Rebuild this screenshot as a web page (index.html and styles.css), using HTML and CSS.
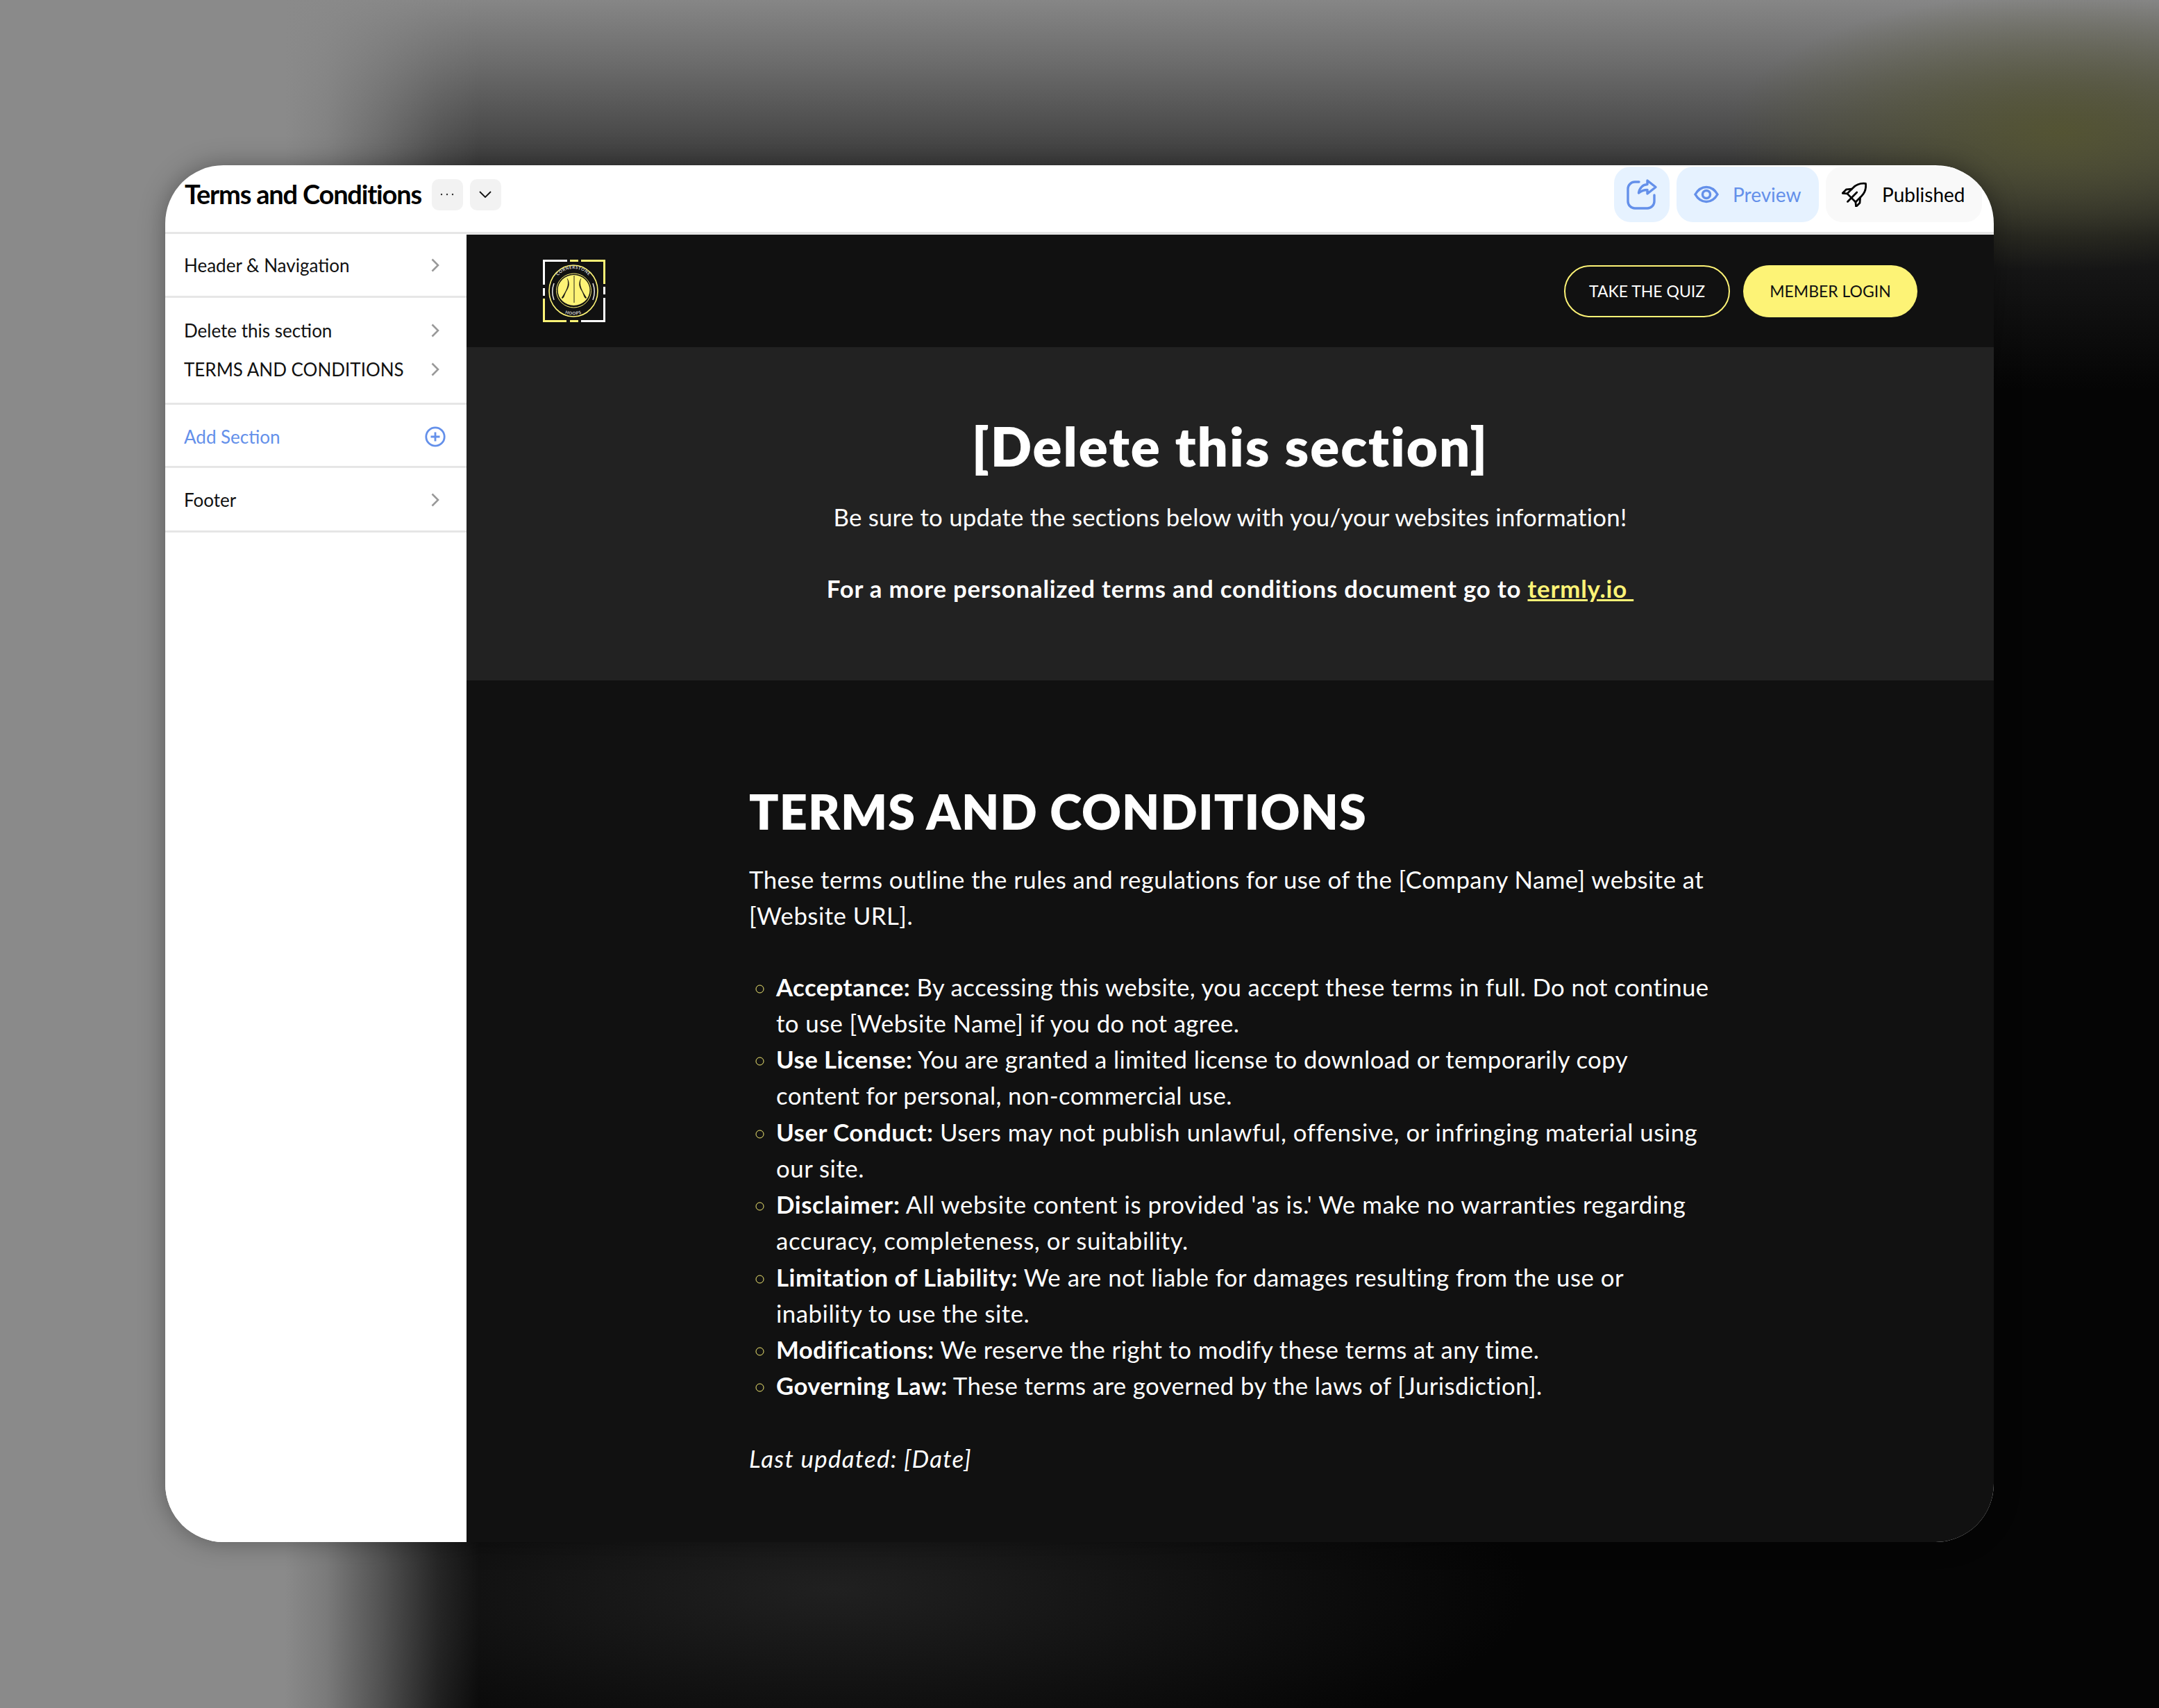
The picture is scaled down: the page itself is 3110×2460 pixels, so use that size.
FILE: index.html
```html
<!DOCTYPE html>
<html lang="en">
<head>
<meta charset="utf-8">
<title>Terms and Conditions</title>
<link rel="stylesheet" href="styles.css">
</head>
<body>
<div class="window">
  <header class="topbar">
    <div class="title-group">
      <h1 class="title">Terms and Conditions</h1>
      <button class="mini-btn" aria-label="More">
        <svg class="mini-dots" viewBox="0 0 20 4"><circle cx="2" cy="2" r="1.200"/><circle cx="10" cy="2" r="1.200"/><circle cx="18" cy="2" r="1.200"/></svg>
      </button>
      <button class="mini-btn" aria-label="Expand">
        <svg class="mini-chevron" viewBox="0 0 18 10"><path d="M1 1l8 8 8-8"/></svg>
      </button>
    </div>
    <div class="actions">
      <button class="action share" aria-label="Share">
        <svg class="share-icon" viewBox="0 0 48 48"><path d="M20 6H14A10 10 0 0 0 4 16V34A10 10 0 0 0 14 44H32A10 10 0 0 0 42 34V25"/><path d="M32 4L44 13.500 32 23V17.500C27 17.500 23 19 19.500 22 20.500 15 25 10 32 9.500Z"/></svg>
      </button>
      <button class="action preview">
        <svg class="eye-icon" viewBox="0 0 36 26"><path d="M2 13C6 6 11 2.500 18 2.500S30 6 34 13C30 20 25 23.500 18 23.500S6 20 2 13Z"/><circle cx="18" cy="13" r="5.500"/></svg>
        <span>Preview</span>
      </button>
      <button class="action published">
        <svg class="rocket-icon" viewBox="-24 -19 42 42"><g transform="rotate(45)"><path d="M0-23C9-16 10-9 10-3V11H-10V-3C-10-9-9-16 0-23Z"/><path d="M-10 0L-16 7V16L-10 11"/><path d="M10 0L16 7V16L10 11"/><path d="M0-2V9M0 11V20"/></g></svg>
        <span>Published</span>
      </button>
    </div>
  </header>
  <div class="body-row">
    <aside class="sidebar">
      <div class="group group-head">
        <a class="row">Header &amp; Navigation<svg class="chev" viewBox="0 0 12 20"><path d="M1.500 1.500l8.500 8.500-8.500 8.500"/></svg></a>
      </div>
      <div class="group group-sections">
        <a class="row">Delete this section<svg class="chev" viewBox="0 0 12 20"><path d="M1.500 1.500l8.500 8.500-8.500 8.500"/></svg></a>
        <a class="row">TERMS AND CONDITIONS<svg class="chev" viewBox="0 0 12 20"><path d="M1.500 1.500l8.500 8.500-8.500 8.500"/></svg></a>
      </div>
      <div class="group group-add">
        <a class="row add">Add Section<svg class="plus" viewBox="0 0 30 30"><circle cx="15" cy="15" r="13.200"/><path d="M15 8.500v13M8.500 15h13"/></svg></a>
      </div>
      <div class="group group-foot">
        <a class="row">Footer<svg class="chev" viewBox="0 0 12 20"><path d="M1.500 1.500l8.500 8.500-8.500 8.500"/></svg></a>
      </div>
    </aside>
    <main class="site">
      <nav class="site-nav">
        <svg class="logo" viewBox="0 0 90 90" role="img" aria-label="Cornerstone Hoops">
          <defs>
            <path id="ringTop" d="M13.500 45A30.500 32 0 0 1 74.500 45"/>
            <path id="ringBot" d="M11 45A33 34.500 0 0 0 77 45"/>
          </defs>
          <g class="f-white"><rect width="35" height="3"/><rect width="3" height="36"/><rect y="41" width="3" height="11"/><rect x="55" y="87" width="35" height="3"/><rect x="87" y="55" width="3" height="35"/><rect x="87" y="39" width="3" height="11"/></g>
          <g class="f-yellow"><rect x="39" width="12" height="3"/><rect x="55" width="35" height="3"/><rect x="87" width="3" height="35"/><rect y="56" width="3" height="34"/><rect y="87" width="34" height="3"/><rect x="39" y="87" width="12" height="3"/></g>
          <ellipse class="ring" cx="44" cy="45" rx="35" ry="37"/>
          <text class="ring-text"><textPath href="#ringTop" startOffset="50%" text-anchor="middle">CORNERSTONE</textPath></text>
          <text class="ring-text"><textPath href="#ringBot" startOffset="50%" text-anchor="middle">HOOPS</textPath></text>
          <path class="arc" d="M16 34C13 42 13 50 16 58M72 34C75 42 75 50 72 58"/>
          <ellipse class="ring-in" cx="44.500" cy="44.500" rx="25" ry="24.500"/>
          <ellipse class="ball" cx="44.500" cy="44" rx="23" ry="22"/>
          <path class="seam" d="M45 23V62"/>
          <path class="seam-curve" d="M35 27C39 36 33 46 27 55C30 58 31 50 34 45C38 39 39 33 35 27ZM55 27C51 36 57 46 63 55C60 58 59 50 56 45C52 39 51 33 55 27Z"/>
        </svg>
        <div class="nav-btns">
          <a class="pill pill-outline">TAKE THE QUIZ</a>
          <a class="pill pill-solid">MEMBER LOGIN</a>
        </div>
      </nav>
      <section class="notice">
        <h2 class="notice-title">[Delete this section]</h2>
        <p class="notice-line">Be sure to update the sections below with you/your websites information!</p>
        <p class="notice-line notice-strong"><strong>For a more personalized terms and conditions document go to <a class="link">termly.io&nbsp;</a></strong></p>
      </section>
      <section class="terms">
        <h2 class="terms-title">TERMS AND CONDITIONS</h2>
        <p class="terms-intro">These terms outline the rules and regulations for use of the [Company Name] website at<br>[Website URL].</p>
        <ul class="terms-list">
          <li><strong>Acceptance:</strong> By accessing this website, you accept these terms in full. Do not continue<br>to use [Website Name] if you do not agree.</li>
          <li><strong>Use License:</strong> You are granted a limited license to download or temporarily copy<br>content for personal, non-commercial use.</li>
          <li><strong>User Conduct:</strong> Users may not publish unlawful, offensive, or infringing material using<br>our site.</li>
          <li><strong>Disclaimer:</strong> All website content is provided 'as is.' We make no warranties regarding<br>accuracy, completeness, or suitability.</li>
          <li><strong>Limitation of Liability:</strong> We are not liable for damages resulting from the use or<br>inability to use the site.</li>
          <li><strong>Modifications:</strong> We reserve the right to modify these terms at any time.</li>
          <li><strong>Governing Law:</strong> These terms are governed by the laws of [Jurisdiction].</li>
        </ul>
        <p class="terms-updated"><em>Last updated: [Date]</em></p>
      </section>
    </main>
  </div>
</div>
</body>
</html>
```
FILE: styles.css
```css
* { box-sizing: border-box; }
html, body { margin: 0; height: 100%; }
body {
  width: 3110px;
  height: 2460px;
  padding: 238px 238px 0;
  overflow: hidden;
  font-family: "Lato", "Noto Sans", sans-serif;
  background-color: #050505;
  background-image:
    linear-gradient(90deg, rgb(138, 138, 138) 0, rgb(138, 138, 138) 410px, rgba(138, 138, 138, .88) 470px, rgba(138, 138, 138, .55) 550px, rgba(138, 138, 138, .18) 630px, rgba(138, 138, 138, 0) 690px),
    radial-gradient(480px 200px at 2970px 190px, rgba(84, 84, 50, .95), rgba(70, 70, 45, 0) 100%),
    linear-gradient(180deg, #868686 0, #6c6c6c 90px, #3c3c3c 238px, #1a1a1a 340px, rgba(14, 14, 14, 0) 560px),
    radial-gradient(1000px 280px at 1200px 2290px, #202020, rgba(20, 20, 20, 0) 100%);
}
button { border: 0; font: inherit; cursor: pointer; }

.window {
  width: 2634px;
  height: 1983px;
  border-radius: 84px;
  overflow: hidden;
  background: #fff;
  display: flex;
  flex-direction: column;
  box-shadow: 0 0 36px rgba(0, 0, 0, .35);
}

.topbar {
  height: 100px;
  flex: none;
  display: flex;
  justify-content: space-between;
  align-items: flex-start;
  padding: 2px 17px 14px 28px;
  border-bottom: 4px solid #e6e6e6;
}
.title-group { height: 80px; display: flex; align-items: center; gap: 10px; }
.title { margin: 0 5px 2px 0; font-size: 38px; font-weight: 700; letter-spacing: -1.200px; color: #000; white-space: nowrap; }
.mini-btn {
  width: 45px; height: 45px; padding: 0;
  border-radius: 10px;
  background: #f2f2f2;
  display: flex; align-items: center; justify-content: center;
}
.mini-dots { width: 20px; height: 4px; fill: #333; }
.mini-chevron { width: 18px; height: 10px; fill: none; stroke: #111; stroke-width: 1.800; }

.actions { display: flex; gap: 10px; }
.action {
  height: 80px;
  padding: 0;
  border-radius: 24px;
  display: flex;
  align-items: center;
  font-size: 28px;
}
.share { width: 80px; justify-content: center; background: #e6f2ff; }
.preview { width: 205px; padding-left: 25px; gap: 20px; background: #e6f2ff; color: #6490ea; }
.published { width: 225px; padding-left: 23px; gap: 22px; background: #f9f9f9; color: #000; }
.share-icon { width: 48px; height: 48px; fill: none; stroke: #6490ea; stroke-width: 3.400; stroke-linejoin: round; stroke-linecap: round; }
.eye-icon { width: 36px; height: 26px; fill: none; stroke: #6490ea; stroke-width: 3.500; }
.rocket-icon { width: 36px; height: 36px; fill: none; stroke: #000; stroke-width: 3.200; stroke-linejoin: round; stroke-linecap: round; }

.body-row { flex: 1; min-height: 0; display: flex; }

.sidebar { width: 434px; flex: none; background: #fff; margin-top: -1px; }
.group { border-bottom: 3px solid #e6e6e6; padding: 0 28px 0 27px; }
.group-head { height: 92px; display: flex; align-items: center; padding-top: 1px; }
.group-sections { height: 154px; padding-top: 19px; }
.group-add { height: 91px; display: flex; align-items: center; padding-top: 3px; }
.group-foot { height: 93px; display: flex; align-items: center; padding-top: 1px; }
.row {
  width: 100%;
  height: 56px;
  display: flex;
  align-items: center;
  justify-content: space-between;
  font-size: 26px;
  color: #111;
  white-space: nowrap;
}
.chev { width: 12px; height: 20px; margin-right: 11px; fill: none; stroke: #999; stroke-width: 2.600; }
.add { color: #6490ea; }
.plus { width: 30px; height: 30px; margin-right: 2px; fill: none; stroke: #6490ea; stroke-width: 2.800; }

.site { flex: 1; min-width: 0; background: #111; color: #fff; font-size: 34.800px; line-height: 52.270px; }
.site-nav { height: 162px; display: flex; align-items: center; justify-content: space-between; padding: 0 110px; }
.logo { width: 90px; height: 90px; }
.f-white { fill: #fff; }
.f-yellow { fill: #fdf376; }
.ring { fill: #111; stroke: #fdf376; stroke-width: 1.600; }
.ring-in { fill: #111; stroke: #fdf376; stroke-width: 1; }
.ball { fill: #fdf376; }
.seam { fill: none; stroke: #111; stroke-width: .9; }
.seam-curve { fill: #111; stroke: #111; stroke-width: .3; }
.arc { fill: none; stroke: #ddd; stroke-width: 1.600; }
.ring-text { font-size: 6px; font-weight: 700; fill: #ddd; letter-spacing: .6px; }

.nav-btns { display: flex; gap: 19px; }
.pill {
  height: 75px;
  border-radius: 38px;
  display: flex;
  align-items: center;
  justify-content: center;
  font-size: 23px;
  line-height: 1;
}
.pill-outline { width: 239px; border: 2px solid #fdf376; color: #fff; }
.pill-solid { width: 251px; background: #fdf376; color: #111; }

.notice { height: 480px; padding-top: 92px; background: #222; text-align: center; }
.notice-title { margin: 0; font-size: 78px; line-height: 100px; font-weight: 800; letter-spacing: 1.950px; }
.notice-line { margin: 27px 0 0; letter-spacing: .22px; }
.notice-strong { margin-top: 51px; letter-spacing: .79px; }
.link { color: #fdf376; text-decoration: underline; }

.terms { padding: 148px 0 0 407px; white-space: nowrap; letter-spacing: .38px; }
.terms-title { margin: 0; font-size: 70px; line-height: 80px; font-weight: 800; letter-spacing: 1.100px; }
.terms-intro { margin: 33px 0 0; letter-spacing: .45px; }
.terms-list { margin: 50px 0 0; padding: 0 0 0 39px; list-style: circle; }
.terms-list li::marker { color: #fdf376; }
.terms-list li:nth-child(3) { letter-spacing: .5px; }
.terms-list li:nth-child(4) { letter-spacing: .6px; }
.terms-list li:nth-child(5) { letter-spacing: .5px; }
.terms-updated { margin: 52px 0 0; letter-spacing: 1.300px; }
```
